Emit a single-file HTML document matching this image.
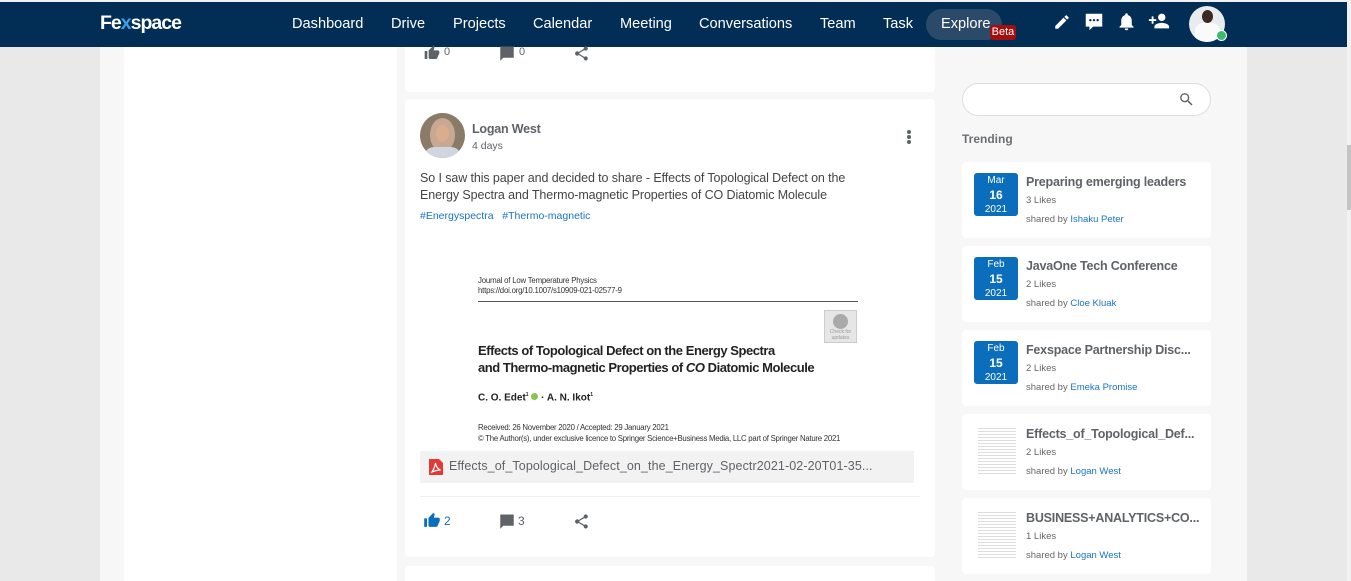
<!DOCTYPE html>
<html><head><meta charset="utf-8">
<style>
*{box-sizing:border-box;margin:0;padding:0}
html,body{width:1351px;height:581px;overflow:hidden}
body{background:#e9e9e9;font-family:"Liberation Sans",sans-serif;position:relative;color:#555}
.abs{position:absolute}
.nav{left:0;top:2px;width:1347px;height:45px;background:#022d54}
.topline{left:0;top:0;width:1351px;height:2px;background:#f2f2f2}
.nav a{position:absolute;top:14px;color:#fff;font-size:14.6px;text-decoration:none}
.container{left:100px;top:47px;width:1147px;height:534px;background:#f7f7f7}
.leftcol{left:124px;top:47px;width:273px;height:534px;background:#fff}
.card{background:#fff;border-radius:4px}
.tcard{position:absolute;left:962px;width:249px;height:76px;background:#fff;border-radius:4px}
.date{position:absolute;left:12px;top:11px;width:44px;height:43px;background:#0a6ebd;border-radius:3px;color:#fff;text-align:center;font-size:10px;line-height:13px;padding-top:1px}
.date b{display:block;font-size:12px;line-height:16px}
.tt{position:absolute;left:64px;top:13px;font-size:12.5px;font-weight:bold;color:#5f6368;white-space:nowrap;letter-spacing:-0.2px}
.tl{position:absolute;left:64px;top:33px;font-size:9.5px;color:#666}
.ts{position:absolute;left:64px;top:52px;font-size:9.5px;color:#666}
.ts span{color:#1a73c8}
.thumb{position:absolute;left:16px;top:12px;width:38px;height:48px;background:repeating-linear-gradient(#fff 0 2px,#ddd 2px 3px)}
.scroll{left:1347px;top:0;width:4px;height:581px;background:#f1f1f1}
</style></head><body>
<div class="abs topline"></div>
<div class="abs container"></div>
<div class="abs leftcol"></div>
<div class="abs scroll"><div style="position:absolute;top:145px;left:0;width:4px;height:65px;background:#c4c4c4"></div></div>

<div class="abs nav">
  <div style="position:absolute;left:100px;top:10px;color:#fff;font-size:19.5px;font-weight:bold;letter-spacing:-1px">Fe<span style="color:#3fa0e8">x</span>space</div>
  <a style="left:292px">Dashboard</a>
  <a style="left:391px">Drive</a>
  <a style="left:453px">Projects</a>
  <a style="left:533px">Calendar</a>
  <a style="left:620px">Meeting</a>
  <a style="left:699px">Conversations</a>
  <a style="left:820px">Team</a>
  <a style="left:883px">Task</a>
  <div style="position:absolute;left:926px;top:7px;width:76px;height:31px;border-radius:16px;background:#2b4a6a"></div>
  <a style="left:941px">Explore</a>
  <div style="position:absolute;left:990px;top:23px;width:26px;height:15px;background:#a50e0e;border-radius:3px;color:#fff;font-size:11px;text-align:center;line-height:15px">Beta</div>
  <svg style="position:absolute;left:1053px;top:11px" width="18" height="18" viewBox="0 0 24 24"><path fill="#fff" d="M3 17.25V21h3.75L17.81 9.940l-3.75-3.75L3 17.25zM20.71 7.04a1 1 0 000-1.41l-2.34-2.34a1 1 0 00-1.41 0l-1.83 1.83 3.75 3.75 1.83-1.830z"/></svg>
  <svg style="position:absolute;left:1083px;top:9px" width="22" height="22" viewBox="0 0 24 24"><path fill="#fff" d="M21 3H3v14h4v4l4-4h10z"/><circle cx="8" cy="10" r="1.3" fill="#022d54"/><circle cx="12" cy="10" r="1.3" fill="#022d54"/><circle cx="16" cy="10" r="1.3" fill="#022d54"/></svg>
  <svg style="position:absolute;left:1116px;top:9px" width="21" height="21" viewBox="0 0 24 24"><path fill="#fff" d="M12 22a2 2 0 002-2h-4a2 2 0 002 2zm6-6v-5c0-3.070-1.64-5.64-4.5-6.32V4a1.5 1.5 0 00-3 0v.68C7.63 5.36 6 7.92 6 11v5l-2 2v1h16v-1z"/></svg>
  <svg style="position:absolute;left:1148px;top:8px" width="22" height="22" viewBox="0 0 24 24"><path fill="#fff" d="M15 12c2.21 0 4-1.79 4-4s-1.79-4-4-4-4 1.79-4 4 1.79 4 4 4zm-9-2V7H4v3H1v2h3v3h2v-3h3v-2zm9 4c-2.67 0-8 1.34-8 4v2h16v-2c0-2.66-5.33-4-8-4z"/></svg>
  <div style="position:absolute;left:1189px;top:4px;width:36px;height:36px;border-radius:50%;background:#e8ecef;overflow:hidden"><div style="position:absolute;left:13px;top:4px;width:11px;height:13px;border-radius:50%;background:#3a2a22"></div><div style="position:absolute;left:6px;top:17px;width:25px;height:20px;border-radius:8px 8px 0 0;background:#fafafa"></div></div>
  <div style="position:absolute;left:1216px;top:28px;width:11px;height:11px;border-radius:50%;background:#3dba6b;border:1px solid #fff"></div>
</div>

<div class="abs card" style="left:405px;top:47px;width:530px;height:45px;border-radius:0 0 4px 4px"></div>
<svg class="abs" style="left:423px;top:45px" width="18" height="16" viewBox="0 0 24 24"><path fill="#5f6368" d="M1 21h4V9H1v12zm22-11c0-1.1-.9-2-2-2h-6.31l.95-4.57.03-.32c0-.41-.17-.79-.44-1.06L14.17 1 7.59 7.59C7.22 7.95 7 8.45 7 9v10c0 1.1.9 2 2 2h9c.83 0 1.54-.5 1.84-1.22l3.02-7.05c.09-.23.14-.47.14-.73v-2z"/></svg>
<div class="abs" style="left:444px;top:46px;font-size:11px;color:#5f6368">0</div>
<svg class="abs" style="left:498px;top:45px" width="18" height="18" viewBox="0 0 24 24"><path fill="#5f6368" d="M21 2H3v15h14l4 4z" transform="scale(-1,1) translate(-24,0)"/></svg>
<div class="abs" style="left:519px;top:46px;font-size:11px;color:#5f6368">0</div>
<svg class="abs" style="left:573px;top:45px" width="17" height="17" viewBox="0 0 24 24"><path fill="#5f6368" d="M18 16.08c-.76 0-1.44.3-1.96.77L8.91 12.7c.05-.23.09-.46.09-.7s-.04-.47-.09-.7l7.05-4.11A2.99 2.99 0 1015 5c0 .24.04.47.09.7L8.04 9.81a3 3 0 100 4.38l7.12 4.16c-.05.21-.08.43-.08.65A2.92 2.92 0 1018 16.08z"/></svg>

<div class="abs card" style="left:405px;top:99px;width:530px;height:458px"></div>
<div class="abs" style="left:420px;top:113px;width:45px;height:45px;border-radius:50%;background:#8a7a68;overflow:hidden"><div style="position:absolute;left:10px;top:5px;width:25px;height:34px;border-radius:50%;background:#c9a893"></div><div style="position:absolute;left:16px;top:12px;width:13px;height:17px;border-radius:50%;background:#d9ad8e"></div><div style="position:absolute;left:4px;top:34px;width:37px;height:15px;background:#cfd6df;border-radius:10px 10px 0 0"></div></div>
<div class="abs" style="left:472px;top:122px;font-size:12.5px;font-weight:bold;color:#5f6368;letter-spacing:-0.2px">Logan West</div>
<div class="abs" style="left:472px;top:140px;font-size:10.5px;color:#5f6368">4 days</div>
<div class="abs" style="left:907px;top:130px;width:4px;height:4px;border-radius:50%;background:#5f6368;box-shadow:0 5px 0 #5f6368,0 10px 0 #5f6368"></div>
<div class="abs" style="left:420px;top:170px;width:458px;font-size:12.5px;line-height:17px;color:#444;letter-spacing:-0.1px">So I saw this paper and decided to share - Effects of Topological Defect on the Energy Spectra and Thermo-magnetic Properties of CO Diatomic Molecule</div>
<div class="abs" style="left:420px;top:210px;font-size:10.5px;color:#1a73c8">#Energyspectra &nbsp;&nbsp;#Thermo-magnetic</div>

<div class="abs" style="left:478px;top:276px;font-size:7.8px;color:#333;line-height:10px;letter-spacing:-0.2px">Journal of Low Temperature Physics<br>https://doi.org/10.1007/s10909-021-02577-9</div>
<div class="abs" style="left:478px;top:301px;width:380px;height:1px;background:#555"></div>
<div class="abs" style="left:824px;top:310px;width:33px;height:33px;background:#e6e6e6;border:1px solid #ccc"><div style="margin:3px auto 0;width:15px;height:15px;border-radius:50%;background:#aaa"></div><div style="font-size:5px;color:#999;text-align:center;line-height:6px">Check for updates</div></div>
<div class="abs" style="left:478px;top:342px;font-size:13px;font-weight:bold;color:#222;line-height:17px;letter-spacing:-0.45px">Effects of Topological Defect on the Energy Spectra<br>and Thermo-magnetic Properties of <i>CO</i> Diatomic Molecule</div>
<div class="abs" style="left:478px;top:392px;font-size:10px;font-weight:bold;color:#222">C. O. Edet<sup style="font-size:5px">1</sup> <span style="display:inline-block;width:7px;height:7px;border-radius:50%;background:#8bc34a"></span> · A. N. Ikot<sup style="font-size:5px">1</sup></div>
<div class="abs" style="left:478px;top:422px;font-size:7.8px;color:#333;line-height:11px;letter-spacing:-0.25px">Received: 26 November 2020 / Accepted: 29 January 2021<br>© The Author(s), under exclusive licence to Springer Science+Business Media, LLC part of Springer Nature 2021</div>

<div class="abs" style="left:420px;top:451px;width:494px;height:32px;background:#f2f2f2"></div>
<svg class="abs" style="left:429px;top:459px" width="14" height="16" viewBox="0 0 14 16"><path fill="#e53935" d="M0 0h10l4 4v12H0z"/><path fill="none" stroke="#fff" stroke-width="1.2" d="M3 13c2-3 3-6 3.5-9 .5 3 2 6 5 7-3 0-6 1-8.5 2z"/></svg>
<div class="abs" style="left:449px;top:459px;font-size:12.5px;color:#5f6368;letter-spacing:0.1px">Effects_of_Topological_Defect_on_the_Energy_Spectr2021-02-20T01-35...</div>
<div class="abs" style="left:420px;top:496px;width:500px;height:1px;background:#eee"></div>

<svg class="abs" style="left:423px;top:512px" width="18" height="17" viewBox="0 0 24 24"><path fill="#0a6ebd" d="M1 21h4V9H1v12zm22-11c0-1.1-.9-2-2-2h-6.31l.95-4.57.03-.32c0-.41-.17-.79-.44-1.06L14.17 1 7.59 7.59C7.22 7.95 7 8.45 7 9v10c0 1.1.9 2 2 2h9c.83 0 1.54-.5 1.84-1.22l3.02-7.05c.09-.23.14-.47.14-.73v-2z"/></svg>
<div class="abs" style="left:444px;top:514px;font-size:12px;color:#0a6ebd">2</div>
<svg class="abs" style="left:498px;top:513px" width="18" height="18" viewBox="0 0 24 24"><path fill="#5f6368" d="M21 2H3v15h14l4 4z" transform="scale(-1,1) translate(-24,0)"/></svg>
<div class="abs" style="left:518px;top:514px;font-size:12px;color:#5f6368">3</div>
<svg class="abs" style="left:573px;top:513px" width="17" height="17" viewBox="0 0 24 24"><path fill="#5f6368" d="M18 16.08c-.76 0-1.44.3-1.96.77L8.91 12.7c.05-.23.09-.46.09-.7s-.04-.47-.09-.7l7.05-4.11A2.99 2.99 0 1015 5c0 .24.04.47.09.7L8.04 9.81a3 3 0 100 4.38l7.12 4.16c-.05.21-.08.43-.08.65A2.92 2.92 0 1018 16.08z"/></svg>

<div class="abs card" style="left:405px;top:566px;width:530px;height:15px;border-radius:4px 4px 0 0"></div>

<div class="abs" style="left:962px;top:83px;width:249px;height:33px;border-radius:17px;background:#fff;border:1px solid #ddd"></div>
<svg class="abs" style="left:1178px;top:91px" width="17" height="17" viewBox="0 0 24 24"><path fill="#5f6368" d="M15.5 14h-.79l-.28-.27A6.47 6.47 0 0016 9.5 6.5 6.5 0 109.5 16c1.61 0 3.09-.59 4.23-1.57l.27.28v.79l5 4.99L20.49 19l-4.990-5zm-6 0C7.01 14 5 11.99 5 9.5S7.01 5 9.5 5 14 7.01 14 9.5 11.99 14 9.5 14z"/></svg>
<div class="abs" style="left:962px;top:132px;font-size:12px;font-weight:bold;color:#6b6f73">Trending</div>

<div class="tcard" style="top:162px"><div class="date">Mar<b>16</b>2021</div><div class="tt">Preparing emerging leaders</div><div class="tl">3 Likes</div><div class="ts">shared by <span>Ishaku Peter</span></div></div>
<div class="tcard" style="top:246px"><div class="date">Feb<b>15</b>2021</div><div class="tt">JavaOne Tech Conference</div><div class="tl">2 Likes</div><div class="ts">shared by <span>Cloe Kluak</span></div></div>
<div class="tcard" style="top:330px"><div class="date">Feb<b>15</b>2021</div><div class="tt">Fexspace Partnership Disc...</div><div class="tl">2 Likes</div><div class="ts">shared by <span>Emeka Promise</span></div></div>
<div class="tcard" style="top:414px"><div class="thumb"></div><div class="tt">Effects_of_Topological_Def...</div><div class="tl">2 Likes</div><div class="ts">shared by <span>Logan West</span></div></div>
<div class="tcard" style="top:498px"><div class="thumb"></div><div class="tt">BUSINESS+ANALYTICS+CO...</div><div class="tl">1 Likes</div><div class="ts">shared by <span>Logan West</span></div></div>
</body></html>
